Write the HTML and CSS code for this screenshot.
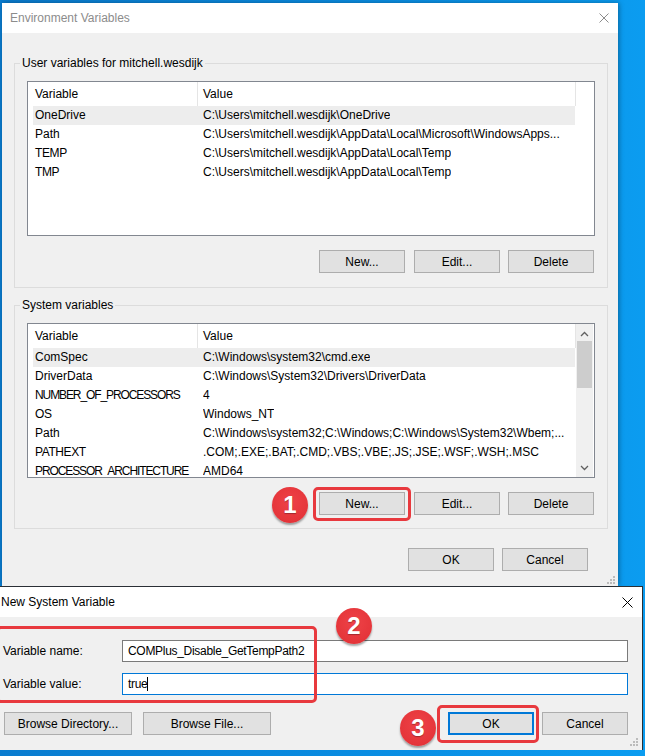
FILE: index.html
```html
<!DOCTYPE html>
<html lang="en">
<head>
    <meta charset="UTF-8">
    <meta name="viewport" content="width=device-width, initial-scale=1.0">
    <title>Environment Variables</title>
    <link rel="stylesheet" href="styles.css">
</head>
<body>
    <div class="screen">
        <div class="window main">
            <div class="titlebar">
                <span class="title inactive">Environment Variables</span>
                <svg class="close" width="10" height="10" viewBox="0 0 10 10"><path d="M0.5 0.5L9.5 9.5M9.5 0.5L0.5 9.5" stroke="#8c8c8c" stroke-width="1"/></svg>
            </div>
            <div class="body">
                <fieldset class="group">
                    <legend>User variables for mitchell.wesdijk</legend>
                    <div class="listview">
                        <div class="lv-main">
                            <div class="lv-header"><div class="col1">Variable</div><div class="col2">Value</div></div>
                            <div class="lv-row hot"><span class="col1">OneDrive</span><span class="col2">C:\Users\mitchell.wesdijk\OneDrive</span></div>
                            <div class="lv-row"><span class="col1">Path</span><span class="col2">C:\Users\mitchell.wesdijk\AppData\Local\Microsoft\WindowsApps...</span></div>
                            <div class="lv-row"><span class="col1 caps">TEMP</span><span class="col2">C:\Users\mitchell.wesdijk\AppData\Local\Temp</span></div>
                            <div class="lv-row"><span class="col1 caps">TMP</span><span class="col2">C:\Users\mitchell.wesdijk\AppData\Local\Temp</span></div>
                        </div>
                    </div>
                    <div class="btn-row">
                        <button class="button">New...</button>
                        <button class="button">Edit...</button>
                        <button class="button">Delete</button>
                    </div>
                </fieldset>

                <fieldset class="group second">
                    <legend>System variables</legend>
                    <div class="listview">
                        <div class="lv-main">
                            <div class="lv-header"><div class="col1">Variable</div><div class="col2">Value</div></div>
                            <div class="lv-row hot"><span class="col1">ComSpec</span><span class="col2">C:\Windows\system32\cmd.exe</span></div>
                            <div class="lv-row"><span class="col1">DriverData</span><span class="col2">C:\Windows\System32\Drivers\DriverData</span></div>
                            <div class="lv-row"><span class="col1 caps long">NUMBER_OF_PROCESSORS</span><span class="col2">4</span></div>
                            <div class="lv-row"><span class="col1 caps">OS</span><span class="col2">Windows_NT</span></div>
                            <div class="lv-row"><span class="col1">Path</span><span class="col2">C:\Windows\system32;C:\Windows;C:\Windows\System32\Wbem;...</span></div>
                            <div class="lv-row"><span class="col1 caps">PATHEXT</span><span class="col2">.COM;.EXE;.BAT;.CMD;.VBS;.VBE;.JS;.JSE;.WSF;.WSH;.MSC</span></div>
                            <div class="lv-row"><span class="col1 caps long">PROCESSOR_ARCHITECTURE</span><span class="col2">AMD64</span></div>
                        </div>
                        <div class="scrollbar">
                            <svg class="arrow" width="9" height="6" viewBox="0 0 9 6"><path d="M1 5L4.5 1.5L8 5" fill="none" stroke="#606060" stroke-width="1.3"/></svg>
                            <div class="thumb"></div>
                            <div class="track"></div>
                            <svg class="arrow" width="9" height="6" viewBox="0 0 9 6"><path d="M1 1L4.5 4.5L8 1" fill="none" stroke="#606060" stroke-width="1.3"/></svg>
                        </div>
                    </div>
                    <div class="btn-row">
                        <button class="button">New...</button>
                        <button class="button">Edit...</button>
                        <button class="button">Delete</button>
                    </div>
                </fieldset>

                <div class="dialog-buttons">
                    <button class="button">OK</button>
                    <button class="button">Cancel</button>
                </div>
                <div class="grip-row">
                    <svg class="grip" width="8" height="8" viewBox="0 0 8 8"><g fill="#bcbcbc"><rect x="6" y="0" width="2" height="2"/><rect x="3" y="3" width="2" height="2"/><rect x="6" y="3" width="2" height="2"/><rect x="0" y="6" width="2" height="2"/><rect x="3" y="6" width="2" height="2"/><rect x="6" y="6" width="2" height="2"/></g></svg>
                </div>
            </div>
        </div>

        <div class="window popup">
            <div class="titlebar">
                <span class="title">New System Variable</span>
                <svg class="close" width="11" height="11" viewBox="0 0 11 11"><path d="M0.5 0.5L10.5 10.5M10.5 0.5L0.5 10.5" stroke="#000" stroke-width="1"/></svg>
            </div>
            <div class="body">
                <div class="form">
                    <label class="field-label">Variable name:</label>
                    <div class="textbox">COMPlus_Disable_GetTempPath2</div>
                    <label class="field-label">Variable value:</label>
                    <div class="textbox focused"><span class="caret">true</span></div>
                </div>
                <div class="popup-buttons">
                    <button class="button wide">Browse Directory...</button>
                    <button class="button wide">Browse File...</button>
                    <span class="spacer"></span>
                    <button class="button default">OK</button>
                    <button class="button">Cancel</button>
                </div>
                <div class="grip-row">
                    <svg class="grip" width="8" height="8" viewBox="0 0 8 8"><g fill="#bcbcbc"><rect x="6" y="0" width="2" height="2"/><rect x="3" y="3" width="2" height="2"/><rect x="6" y="3" width="2" height="2"/><rect x="0" y="6" width="2" height="2"/><rect x="3" y="6" width="2" height="2"/><rect x="6" y="6" width="2" height="2"/></g></svg>
                </div>
            </div>
        </div>

        <!-- step markers drawn on top of the screenshot -->
        <div class="mark-box step1"></div>
        <div class="mark-num num1">1</div>
        <div class="mark-box step2"></div>
        <div class="mark-num num2">2</div>
        <div class="mark-box step3"></div>
        <div class="mark-num num3">3</div>
    </div>
</body>
</html>
```

FILE: styles.css
```css
* {
    box-sizing: border-box;
}
body {
    margin: 0;
    font-family: "Liberation Sans", Arial, sans-serif;
    font-size: 12px;
    color: #000;
    background: #0a84d8;
}
.screen {
    position: relative;
    width: 645px;
    height: 756px;
    overflow: hidden;
    background: linear-gradient(to right, #0a7ccf 0%, #0a8ee3 60%, #0b9cf0 100%);
}
.window {
    background: #f0f0f0;
}
.main {
    margin: 3px 0 0 2px;
    width: 616px;
    height: 583px;
    overflow: hidden;
    box-shadow: 1px 0 5px rgba(0, 0, 0, 0.35);
}
.titlebar {
    height: 30px;
    background: #fff;
    display: flex;
    align-items: center;
    justify-content: space-between;
    padding-left: 8px;
}
.title {
    line-height: 16px;
}
.inactive {
    color: #8c8c8c;
}
.main .close {
    margin-right: 9px;
    margin-top: -1px;
}
.main .body {
    padding-top: 22px;
}
.group {
    margin: 0 10px 0 12px;
    padding: 10px 12px 14px 12px;
    border: 1px solid #dcdcdc;
    min-width: 0;
}
.group legend {
    padding: 0 2px;
    margin-left: -7px;
    line-height: 16px;
}
.group.second {
    margin-top: 9px;
    padding-bottom: 13px;
}
.listview {
    height: 155px;
    border: 1px solid #828790;
    background: #fff;
    display: flex;
    overflow: hidden;
}
.lv-main {
    width: 548px;
}
.lv-header {
    height: 24px;
    display: flex;
    align-items: center;
}
.lv-header .col1 {
    width: 170px;
    height: 24px;
    line-height: 24px;
    padding-left: 7px;
    border-right: 1px solid #e5e5e5;
}
.lv-header .col2 {
    flex: 1;
    height: 24px;
    line-height: 24px;
    padding-left: 5px;
    border-right: 1px solid #e5e5e5;
}
.lv-row {
    height: 19px;
    line-height: 19px;
    margin-left: 5px;
    width: 542px;
    display: flex;
    white-space: nowrap;
}
.lv-row .col1 {
    width: 170px;
    padding-left: 2px;
    flex-shrink: 0;
    overflow: hidden;
}
.lv-row .col2 {
    overflow: hidden;
}
.caps {
    letter-spacing: -0.4px;
}
.caps.long {
    letter-spacing: -1.1px;
}
.hot {
    background: #ededed;
}
.scrollbar {
    width: 17px;
    background: #f0f0f0;
    display: flex;
    flex-direction: column;
    align-items: center;
}
.scrollbar .arrow {
    margin: 7px 0 4px;
}
.scrollbar .arrow:last-child {
    margin: 4px 0 6px;
}
.thumb {
    width: 15px;
    height: 47px;
    background: #cdcdcd;
}
.track {
    flex: 1;
}
.btn-row {
    margin-top: 14px;
    padding-right: 1px;
    display: flex;
    justify-content: flex-end;
    gap: 8px;
}
.btn-row .button:first-child {
    margin-right: 1px;
}
.button {
    width: 86px;
    height: 23px;
    padding: 0;
    background: #e1e1e1;
    border: 1px solid #adadad;
    font-family: "Liberation Sans", Arial, sans-serif;
    font-size: 12px;
    color: #000;
}
.dialog-buttons {
    margin-top: 19px;
    padding-right: 30px;
    display: flex;
    justify-content: flex-end;
    gap: 8px;
}
.grip-row {
    display: flex;
    justify-content: flex-end;
}
.main .grip-row {
    margin-top: 5px;
    padding-right: 3px;
}

.popup {
    width: 643px;
    height: 164px;
    border-top: 1px solid #2a2f35;
    border-right: 1px solid #2a2f35;
    overflow: hidden;
}
.popup .titlebar {
    height: 30px;
    padding-left: 1px;
}
.popup .close {
    margin-right: 9px;
}
.popup .body {
    padding: 23px 14px 0 3px;
}
.form {
    display: grid;
    grid-template-columns: 119px 506px;
    row-gap: 11px;
    align-items: center;
}
.textbox {
    height: 22px;
    line-height: 20px;
    border: 1px solid #7a7a7a;
    background: #fff;
    padding-left: 5px;
    white-space: nowrap;
    letter-spacing: -0.3px;
}
.textbox.focused {
    border-color: #0078d7;
}
.caret {
    border-right: 1px solid #000;
    padding-right: 0;
}
.popup-buttons {
    margin-top: 17px;
    margin-left: 1px;
    display: flex;
    gap: 8px;
}
.popup-buttons .wide {
    width: 128px;
}
.popup-buttons .wide + .wide {
    margin-left: 3px;
}
.spacer {
    flex: 1;
}
.button.default {
    border: 2px solid #0078d7;
}
.popup .grip-row {
    margin-top: 3px;
    margin-right: -10px;
}

.mark-box {
    position: absolute;
    border: 3px solid #e8393e;
    border-radius: 5px;
}
.step1 {
    left: 313px;
    top: 487px;
    width: 98px;
    height: 34px;
}
.step2 {
    left: -4px;
    top: 626px;
    width: 321px;
    height: 77px;
}
.step3 {
    left: 437px;
    top: 705px;
    width: 102px;
    height: 38px;
}
.mark-num {
    position: absolute;
    width: 36px;
    height: 36px;
    border-radius: 50%;
    background: radial-gradient(circle at 50% 40%, #ee4247 0%, #e5353a 70%, #c8272c 100%);
    box-shadow: 0 2px 2px rgba(0, 0, 0, 0.35);
    color: #fff;
    font-family: "Liberation Sans", Arial, sans-serif;
    font-weight: bold;
    font-size: 24px;
    line-height: 36px;
    text-align: center;
    text-shadow: 0 1px 1px rgba(0, 0, 0, 0.3);
}
.num1 {
    left: 272px;
    top: 487px;
}
.num2 {
    left: 336px;
    top: 608px;
}
.num3 {
    left: 400px;
    top: 710px;
}
```
